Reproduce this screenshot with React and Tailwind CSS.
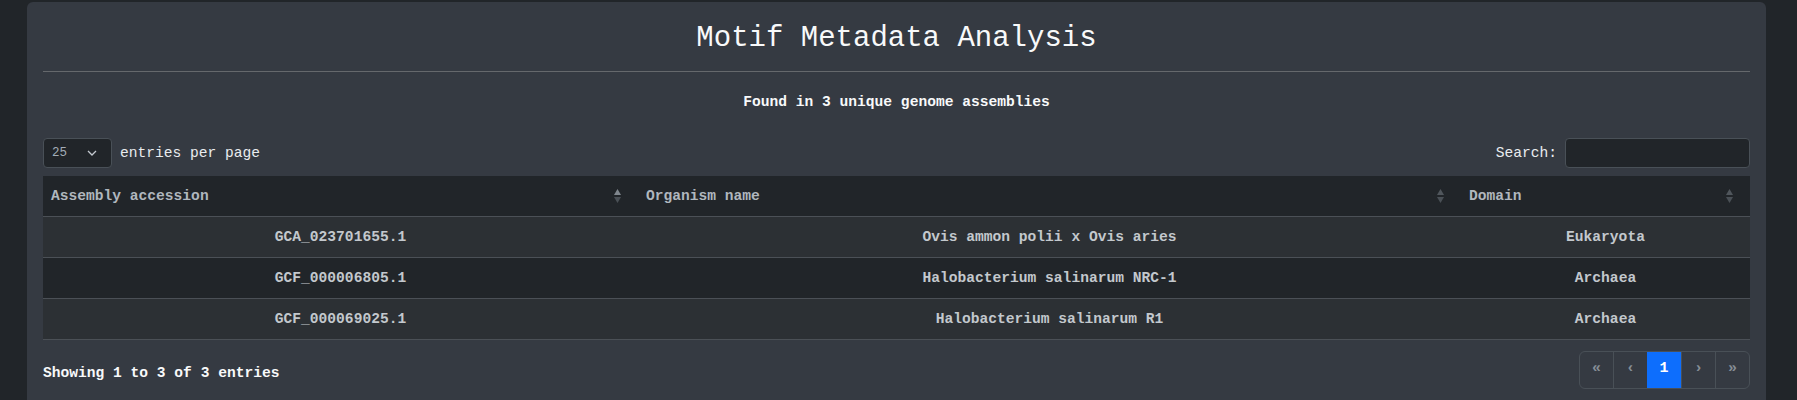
import React from "react";

const rows = [
  { acc: "GCA_023701655.1", name: "Ovis ammon polii x Ovis aries", domain: "Eukaryota" },
  { acc: "GCF_000006805.1", name: "Halobacterium salinarum NRC-1", domain: "Archaea" },
  { acc: "GCF_000069025.1", name: "Halobacterium salinarum R1", domain: "Archaea" },
];

function SortArrows({ active }) {
  return (
    <svg width="7" height="14" viewBox="0 0 7 14">
      <polygon points="0,6 3.5,0 7,6" fill={active ? "#80878e" : "#50565c"} />
      <polygon points="0,8 7,8 3.5,14" fill="#4a5056" />
    </svg>
  );
}

function HeaderCell({ label, width, active }) {
  return (
    <th className={`${width} h-[40px] border-b border-[#4b5056] p-0 text-left font-bold`}>
      <div className="flex items-center justify-between pl-[8px] pr-[17px]">
        <span className="pt-[3px]">{label}</span>
        <SortArrows active={active} />
      </div>
    </th>
  );
}

export default function App() {
  return (
    <div className="min-h-screen bg-[#212529] pl-[27px] pr-[31px] pt-[2px] font-['Liberation_Mono',monospace]">
      <div className="rounded-t-[6px] bg-[#353a42] px-4 pt-[19px] pb-6">
        <h1 className="text-center text-[29px] leading-[35px] text-[#f8f9fa]">
          Motif Metadata Analysis
        </h1>
        <hr className="mt-[15px] border-[#65686c]" />
        <p className="mt-[18px] text-center text-[14.6px] font-bold leading-6 text-[#f8f9fa]">
          Found in 3 unique genome assemblies
        </p>

        {/* entries + search */}
        <div className="mt-[24px] flex items-center justify-between text-[14.6px] text-[#e9ecef]">
          <div className="flex items-center gap-2">
            <div className="flex h-[30px] w-[69px] items-center justify-between rounded-[4px] border border-[#495057] bg-[#212529] pl-[8px] pr-[14px]">
              <span className="text-[12.5px] text-[#a3adb8]">25</span>
              <svg width="10" height="6" viewBox="0 0 10 6" fill="none">
                <path d="M1 1 L5 5 L9 1" stroke="#c3c9cf" strokeWidth="1.3" />
              </svg>
            </div>
            <span className="pt-[2px]">entries per page</span>
          </div>
          <div className="flex items-center gap-2">
            <span className="pt-[2px]">Search:</span>
            <input
              type="text"
              className="h-[30px] w-[185px] rounded-[4px] border border-[#495057] bg-[#212529] outline-none"
            />
          </div>
        </div>

        {/* table */}
        <table className="mt-[8px] w-[1707px] table-fixed border-collapse text-[14.6px]">
          <thead className="bg-[#212529] text-[#b0b7be]">
            <tr>
              <HeaderCell label="Assembly accession" width="w-[595px]" active />
              <HeaderCell label="Organism name" width="w-[823px]" />
              <HeaderCell label="Domain" width="w-[289px]" />
            </tr>
          </thead>
          <tbody className="font-bold text-[#c3c8cd]">
            {rows.map((r, i) => (
              <tr
                key={r.acc}
                className={`h-[41px] border-b border-[#4b5056] ${
                  i % 2 === 0 ? "bg-[#2c3034]" : "bg-[#212529]"
                }`}
              >
                <td className="pt-[3px] text-center">{r.acc}</td>
                <td className="pt-[3px] text-center">{r.name}</td>
                <td className="pt-[3px] text-center">{r.domain}</td>
              </tr>
            ))}
          </tbody>
        </table>

        {/* footer */}
        <div className="mt-[11px] flex items-center justify-between">
          <span className="pt-[8px] text-[14.6px] font-bold text-[#f8f9fa]">Showing 1 to 3 of 3 entries</span>
          <div className="flex overflow-hidden rounded-[6px] border border-[#495057] font-bold text-[#868e96]">
            <div className="flex h-[36px] w-[33px] items-center justify-center text-[15px]">«</div>
            <div className="flex h-[36px] w-[34px] items-center justify-center border-l border-[#495057] text-[15px]">‹</div>
            <div className="flex h-[36px] w-[34px] items-center justify-center bg-[#0d6efd] text-[15px] text-white">1</div>
            <div className="flex h-[36px] w-[34px] items-center justify-center border-l border-[#495057] text-[15px]">›</div>
            <div className="flex h-[36px] w-[34px] items-center justify-center border-l border-[#495057] text-[15px]">»</div>
          </div>
        </div>
      </div>
    </div>
  );
}
